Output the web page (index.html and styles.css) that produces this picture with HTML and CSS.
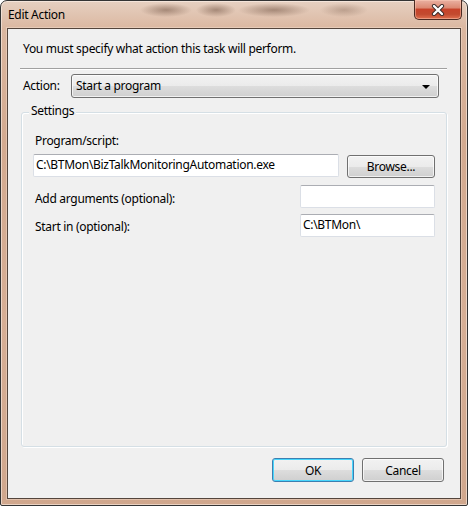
FILE: index.html
```html
<!DOCTYPE html>
<html>
<head>
  <title>Edit Action</title>
  <meta charset="UTF-8">
  <link rel="stylesheet" href="styles.css">
</head>
<body>
  <div class="window">
    <div class="titlebar">
      <span class="title">Edit Action</span>
      <button class="close-btn" type="button" aria-label="Close">
        <svg width="14" height="12" viewBox="0 0 14 12">
          <path d="M3 2 L11 10 M11 2 L3 10" stroke="#3a2a28" stroke-width="4.2" stroke-linecap="round"/>
          <path d="M3 2 L11 10 M11 2 L3 10" stroke="#ffffff" stroke-width="2.4" stroke-linecap="round"/>
        </svg>
      </button>
    </div>

    <div class="client">
      <p class="intro">You must specify what action this task will perform.</p>
      <div class="separator"></div>

      <div class="action-row">
        <label class="action-label">Action:</label>
        <div class="combo">
          <span>Start a program</span>
          <span class="combo-arrow"></span>
        </div>
      </div>

      <div class="group">
        <div class="group-title">Settings</div>
        <div class="field-label">Program/script:</div>
        <div class="program-row">
          <div class="textbox textbox-wide">C:\BTMon\BizTalkMonitoringAutomation.exe</div>
          <button class="btn btn-browse" type="button">Browse...</button>
        </div>
        <div class="field-row row-args">
          <label>Add arguments (optional):</label>
          <div class="textbox textbox-small"></div>
        </div>
        <div class="field-row row-start">
          <label>Start in (optional):</label>
          <div class="textbox textbox-small">C:\BTMon\</div>
        </div>
      </div>

      <div class="footer">
        <button class="btn btn-default" type="button">OK</button>
        <button class="btn" type="button">Cancel</button>
      </div>
    </div>
  </div>
</body>
</html>
```

FILE: styles.css
```css
body {
  margin: 0;
  padding: 0;
  font-family: 'Noto Sans', 'Open Sans', sans-serif;
  font-size: 12px;
  line-height: 16px;
  letter-spacing: -0.3px;
  color: #000;
}
.window {
  width: 468px;
  height: 506px;
  box-sizing: border-box;
  border: 1px solid #343434;
  border-radius: 7px 7px 2px 2px;
  padding: 0 6px 6px 6px;
  display: flex;
  flex-direction: column;
  background: linear-gradient(to bottom, #e6d0c1 0, #dbb7a0 28px, #d3aa90 140px, #d6ae95 320px, #d0a78d 506px);
  box-shadow: inset 0 0 0 1px rgba(255, 245, 238, 0.55);
}
.titlebar {
  height: 27px;
  display: flex;
  justify-content: space-between;
  align-items: flex-start;
  /* blurred text of the window behind, seen through the glass */
  background:
    radial-gradient(ellipse 26px 7px at 159px 9px, rgba(125, 95, 78, 0.6), transparent),
    radial-gradient(ellipse 20px 7px at 209px 9px, rgba(125, 95, 78, 0.6), transparent),
    radial-gradient(ellipse 36px 7px at 267px 9px, rgba(125, 95, 78, 0.6), transparent),
    radial-gradient(ellipse 24px 7px at 337px 9px, rgba(140, 110, 92, 0.45), transparent);
}
.title {
  padding: 6px 0 0 1px;
}
.close-btn {
  width: 48px;
  height: 20px;
  margin: -1px -1px 0 0;
  padding: 0;
  border: 1px solid #4a2a22;
  border-top: none;
  border-radius: 0 0 5px 5px;
  background: linear-gradient(to bottom, #eab1a2 0%, #dc8a74 40%, #c7432a 50%, #c24a2f 75%, #e0704f 100%);
  box-shadow: inset 0 0 0 1px rgba(255, 210, 190, 0.45);
  display: flex;
  align-items: center;
  justify-content: center;
}
.client {
  flex: 1;
  display: flex;
  flex-direction: column;
  background-color: #f0f0f0;
  border: 1px solid #54453c;
  box-shadow: 0 0 0 1px rgba(255, 240, 230, 0.35);
}
.intro {
  margin: 12px 0 0 15px;
}
.separator {
  margin: 11px 13px 0 12px;
  border-top: 1px solid #a0a0a0;
  border-bottom: 1px solid #ffffff;
}
.action-row {
  display: flex;
  margin-top: 4px;
}
.action-label {
  width: 48px;
  margin-left: 15px;
  padding-top: 4px;
}
.combo {
  width: 368px;
  height: 24px;
  box-sizing: border-box;
  display: flex;
  align-items: center;
  justify-content: space-between;
  padding: 0 8px 0 4px;
  border: 1px solid #707070;
  border-radius: 3px;
  background: linear-gradient(to bottom, #f2f2f2 0%, #ebebeb 50%, #dddddd 51%, #cfcfcf 100%);
  box-shadow: inset 0 0 0 1px rgba(255, 255, 255, 0.7);
}
.combo-arrow {
  width: 0;
  height: 0;
  border-left: 4px solid transparent;
  border-right: 4px solid transparent;
  border-top: 4px solid #000;
  margin-top: 1px;
}
.group {
  flex: 1;
  display: flex;
  flex-direction: column;
  margin: 14px 13px 0 13px;
  padding: 0 11px;
  border: 1px solid #d5dfe5;
  border-radius: 3px;
  box-shadow: inset 1px 1px 0 #ffffff, 1px 1px 0 #ffffff;
}
.group-title {
  align-self: flex-start;
  margin: -10px 0 0 -4px;
  padding: 0 2px;
  background-color: #f0f0f0;
}
.field-label {
  margin-top: 14px;
  padding-left: 2px;
}
.program-row {
  display: flex;
  align-items: flex-start;
  margin-top: 5px;
}
.textbox {
  height: 23px;
  box-sizing: border-box;
  padding: 2px 2px 0 2px;
  background-color: #fff;
  border: 1px solid #dbdfe6;
  border-top-color: #abadb3;
  border-radius: 2px;
  white-space: nowrap;
  overflow: hidden;
}
.textbox-wide {
  width: 306px;
}
.textbox-small {
  width: 135px;
}
.btn {
  width: 82px;
  height: 24px;
  padding: 0;
  font-family: inherit;
  font-size: 12px;
  letter-spacing: inherit;
  color: #000;
  border: 1px solid #707070;
  border-radius: 3px;
  background: linear-gradient(to bottom, #f2f2f2 0%, #ebebeb 50%, #dddddd 51%, #cfcfcf 100%);
  box-shadow: inset 0 0 0 1px rgba(255, 255, 255, 0.7);
}
.btn-browse {
  width: 88px;
  height: 23px;
  margin: 1px 0 0 8px;
}
.btn-default {
  border-color: #3c7fb1;
  box-shadow: inset 0 0 0 1px #48d6fc;
}
.field-row {
  display: flex;
  justify-content: space-between;
}
.field-row label {
  padding-left: 2px;
}
.row-args {
  margin-top: 7px;
}
.row-args label {
  padding-top: 6px;
}
.row-start {
  margin-top: 6px;
}
.row-start label {
  padding-top: 5px;
}
.footer {
  display: flex;
  justify-content: flex-end;
  gap: 8px;
  margin: 11px 16px 16px 0;
}
```
